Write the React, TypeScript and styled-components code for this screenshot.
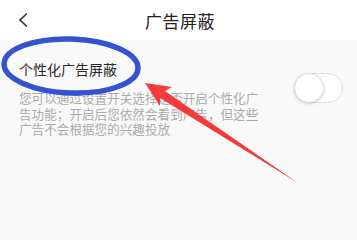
import React from 'react';
import styled, { createGlobalStyle } from 'styled-components';

const GlobalStyle = createGlobalStyle`
  html, body {
    margin: 0;
    padding: 0;
    background: #f9f9f9;
  }
  body {
    font-family: "Noto Sans CJK SC", "Noto Sans", sans-serif;
  }
`;

const Page = styled.div`
  position: relative;
  width: 357px;
  height: 205px;
  overflow: hidden;
  background: #f9f9f9;
`;

const Header = styled.header`
  height: 40px;
  background: #ffffff;
  display: flex;
  align-items: center;
  justify-content: center;
  position: relative;
`;

const BackButton = styled.button`
  position: absolute;
  left: 12px;
  top: 8px;
  width: 22px;
  height: 24px;
  padding: 0;
  border: none;
  background: transparent;
  display: flex;
  align-items: center;
  justify-content: center;
`;

const Title = styled.h1`
  margin: 0 0 0 3px;
  font-size: 17px;
  font-weight: 400;
  color: #222;
  letter-spacing: 0.5px;
`;

const Content = styled.main`
  padding: 19px 14px 0 19px;
`;

const SettingRow = styled.div`
  display: flex;
  align-items: flex-start;
  justify-content: space-between;
`;

const TextCol = styled.div`
  display: flex;
  flex-direction: column;
  gap: 11px;
`;

const ItemTitle = styled.div`
  font-size: 14px;
  line-height: 20px;
  color: #2a2a2a;
`;

const ItemDesc = styled.p`
  margin: 0;
  width: 243px;
  font-size: 12.6px;
  line-height: 15.5px;
  color: #ababab;
`;

const Toggle = styled.div<{ $on?: boolean }>`
  margin-top: 14px;
  width: 49px;
  height: 30px;
  box-sizing: border-box;
  border-radius: 15px;
  border: 1px solid #e2e2e2;
  background: ${p => (p.$on ? '#4cd964' : '#ffffff')};
  position: relative;
  flex-shrink: 0;
`;

const Knob = styled.span`
  position: absolute;
  left: -1px;
  top: -1px;
  width: 30px;
  height: 30px;
  border-radius: 50%;
  background: #fff;
  box-sizing: border-box;
  border: 1px solid #dcdcdc;
  box-shadow: 0 1px 3px rgba(0, 0, 0, 0.18);
`;

const Annotations = styled.svg`
  position: absolute;
  left: 0;
  top: 0;
  pointer-events: none;
`;

export default function App() {
  return (
    <>
      <GlobalStyle />
      <Page>
        <Header>
          <BackButton aria-label="返回">
            <svg width="12" height="16" viewBox="0 0 12 16">
              <path d="M10 1.5 L3 8 L10 14.5" fill="none" stroke="#3a3530" strokeWidth="1.7" />
            </svg>
          </BackButton>
          <Title>广告屏蔽</Title>
        </Header>
        <Content>
          <SettingRow>
            <TextCol>
              <ItemTitle>个性化广告屏蔽</ItemTitle>
              <ItemDesc>
                您可以通过设置开关选择是否开启个性化广告功能；开启后您依然会看到广告，但这些广告不会根据您的兴趣投放
              </ItemDesc>
            </TextCol>
            <Toggle>
              <Knob />
            </Toggle>
          </SettingRow>
        </Content>
        <Annotations width="357" height="205" viewBox="0 0 357 205">
          <ellipse
            cx="71"
            cy="66"
            rx="67"
            ry="27"
            transform="rotate(2 71 66)"
            fill="none"
            stroke="#3552d2"
            strokeWidth="5.5"
          />
          <polygon
            points="145,83 172,87 165,91 298,183 160,98 160,106"
            fill="#f43a3a"
          />
        </Annotations>
      </Page>
    </>
  );
}
